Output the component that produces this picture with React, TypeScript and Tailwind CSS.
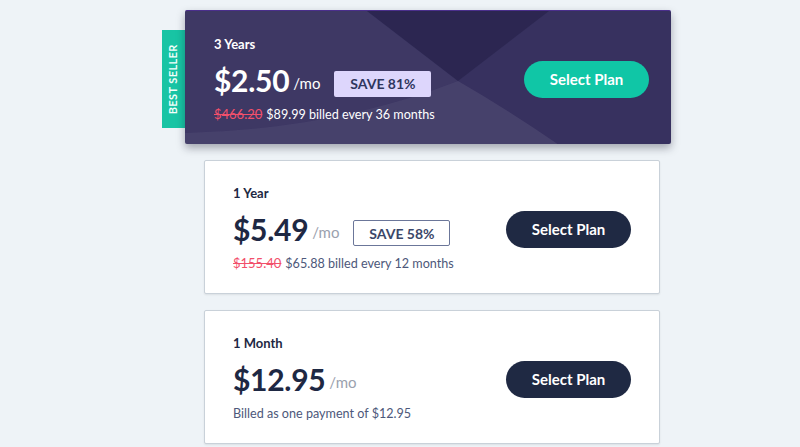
import React from "react";

const font = { fontFamily: "Lato, 'Noto Sans', sans-serif" };

function PlanCard({
  title,
  price,
  save,
  old,
  billed,
}: {
  title: string;
  price: string;
  save?: string;
  old?: string;
  billed: string;
}) {
  return (
    <div className="w-[456px] h-[134px] bg-white border border-[#c9d1d9] rounded-[2px] shadow-[0_1px_2px_rgba(0,0,0,0.08)] flex items-center justify-between pl-[28px] pr-[28px]">
      <div className="flex flex-col pt-[4px]">
        <div className="text-[13px] leading-[16px] font-bold text-[#1e2843]">{title}</div>
        <div className="flex items-center mt-[9px] h-[38px]">
          <span className="text-[30px] leading-[38px] font-bold text-[#1e2843] tracking-[-0.3px]">{price}</span>
          <span className="text-[15px] text-[#9aa1ae] ml-[4px] mt-[7px]">/mo</span>
          {save && (
            <span className="ml-[14px] mt-[8px] w-[97px] h-[26px] border border-[#6b7699] rounded-[2px] flex items-center justify-center text-[14px] font-bold text-[#3b4769]">
              {save}
            </span>
          )}
        </div>
        <div className="mt-[6px] text-[13px] leading-[18px] text-[#4d587a]">
          {old && <span className="line-through text-[#f2506b] mr-[4px]">{old}</span>}
          <span className="text-[12.6px] text-[#4d587a]">{billed}</span>
        </div>
      </div>
      <button className="w-[125px] h-[37px] rounded-full bg-[#1f2943] text-white text-[15px] font-bold mt-[4px]">
        Select Plan
      </button>
    </div>
  );
}

export default function App() {
  return (
    <div style={font} className="w-[800px] h-[447px] bg-[#eef3f7] overflow-hidden">
      <div className="flex flex-col gap-[16px] pt-[10px] ml-[204px] w-[456px]">
        <div className="relative -ml-[19px] w-[486px] h-[134px]">
          <div className="absolute left-[-23px] top-[20px] w-[23px] h-[98px] bg-[#18c4a4] flex items-center justify-center">
            <span className="-rotate-90 whitespace-nowrap text-[11px] font-bold text-[#f2fffb] tracking-[0.4px]">
              BEST SELLER
            </span>
          </div>
          <div className="relative w-full h-full rounded-[2px] bg-[#37315f] border-t border-[#4b2f8c] shadow-[0_4px_8px_rgba(20,20,40,0.35)] overflow-hidden">
            <svg className="absolute inset-0" width="486" height="134" viewBox="0 0 486 134">
              <path d="M0 0 L182 0 L273 70 Q150 118 0 122 Z" fill="#ffffff" fillOpacity="0.035" />
              <path d="M182 0 L364 0 L273 70 Z" fill="#1e1a40" fillOpacity="0.45" />
              <path d="M0 122 Q150 118 273 70 Q325 100 374 134 L0 134 Z" fill="#ffffff" fillOpacity="0.08" />
            </svg>
            <div className="relative h-full flex items-center justify-between pl-[29px] pr-[22px]">
              <div className="flex flex-col pt-[4px]">
                <div className="text-[13px] leading-[16px] font-bold text-white">3 Years</div>
                <div className="flex items-center mt-[9px] h-[38px]">
                  <span className="text-[30px] leading-[38px] font-bold text-white tracking-[-0.3px]">$2.50</span>
                  <span className="text-[15px] text-white ml-[4px] mt-[7px]">/mo</span>
                  <span className="ml-[14px] mt-[8px] w-[97px] h-[26px] bg-[#ddd6fc] rounded-[2px] flex items-center justify-center text-[14px] font-bold text-[#2f365f]">
                    SAVE 81%
                  </span>
                </div>
                <div className="mt-[6px] text-[13px] leading-[18px] text-white">
                  <span className="line-through text-[#f2506b] mr-[4px]">$466.20</span>
                  <span className="text-[12.6px]">$89.99 billed every 36 months</span>
                </div>
              </div>
              <button className="w-[125px] h-[37px] rounded-full bg-[#10c6a6] text-white text-[15px] font-bold mt-[4px]">
                Select Plan
              </button>
            </div>
          </div>
        </div>
        <PlanCard
          title="1 Year"
          price="$5.49"
          save="SAVE 58%"
          old="$155.40"
          billed="$65.88 billed every 12 months"
        />
        <PlanCard title="1 Month" price="$12.95" billed="Billed as one payment of $12.95" />
      </div>
    </div>
  );
}
